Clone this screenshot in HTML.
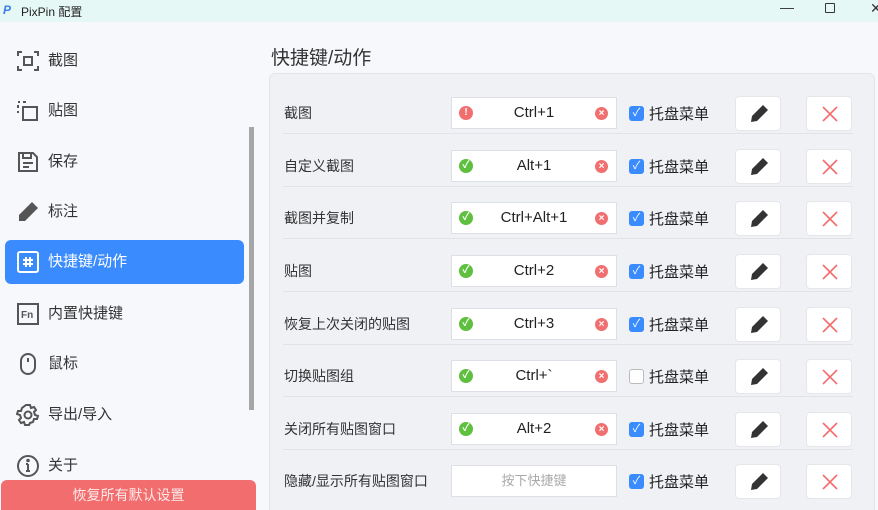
<!DOCTYPE html>
<html><head><meta charset="utf-8"><style>
*{margin:0;padding:0;box-sizing:border-box}
html,body{width:878px;height:510px;overflow:hidden}
body{background:#f7f8fc;font-family:"Liberation Sans","Noto Sans CJK SC",sans-serif;color:#333;position:relative}
.title{position:absolute;left:0;top:0;width:878px;height:22px;background:#e6f8f5;font-size:12px}
.title .t{position:absolute;left:21px;top:3px;color:#222}
.logo{position:absolute;left:3px;top:3px;width:13px;height:14px;color:#3a7fe8;font-weight:bold;font-size:12px;font-style:italic}
.wc{position:absolute;top:0;font-size:14px;color:#333}
.side{position:absolute;left:0;top:22px;width:258px;height:488px}
.item{position:absolute;left:5px;width:239px;height:44px;font-size:15px;color:#333}
.item svg{position:absolute;left:11px;top:10px}
.item span{position:absolute;left:43px;top:10px}
.item.act{background:#3a8bfd;border-radius:6px;color:#fff}
.sb{position:absolute;left:249px;top:127px;width:5px;height:283px;background:#a6a6a6}
.reset{position:absolute;left:1px;top:480px;width:255px;height:30px;background:#f26d6d;border-radius:6px 6px 0 0;font-size:14px;text-align:center;line-height:30px;color:#ffe9e9}
h1{position:absolute;left:271px;top:43px;font-size:19px;font-weight:normal;color:#333}
.panel{position:absolute;left:269px;top:73px;width:606px;height:450px;background:#eff1f5;border:1px solid #e2e4e8;border-radius:6px}
.row{position:absolute;left:283px;width:570px;height:52px}
.row .lab{position:absolute;left:1px;top:5px;font-size:14px;color:#333}
.row .line{position:absolute;left:0;top:35px;width:570px;height:1px;background:#e1e3e7}
.inp{position:absolute;left:168px;top:-1px;width:166px;height:32px;background:#fff;border:1px solid #dcdfe6;font-size:15px;text-align:center;line-height:30px;color:#222}
.inp .ic{position:absolute;left:7px;top:8px;width:14px;height:14px;border-radius:50%;color:#fff;font-size:10px;line-height:14px;font-weight:bold}
.inp .x{position:absolute;right:8px;top:9px;width:13px;height:13px;border-radius:50%;background:#f16f6f;color:#fff;font-size:10px;line-height:13px;font-weight:bold}
.inp.ph{color:#aaa;font-size:13px}
.cb{position:absolute;left:346px;top:8px;width:15px;height:15px;border-radius:3px;background:#3a8bfd;color:#fff;font-size:11px;line-height:15px;text-align:center}
.cb.off{background:#fff;border:1px solid #bbb}
.ct{position:absolute;left:366px;top:5px;font-size:15px;color:#222}
.btn{position:absolute;top:-2px;width:46px;height:35px;background:#fff;border:1px solid #e4e6ea;border-radius:4px}
.btn svg{position:absolute;left:13px;top:7px}
</style></head><body>
<div class="title"><div class="logo">P</div><div class="t">PixPin 配置</div>
<div class="wc" style="left:780px;top:-1px">—</div>
<div style="position:absolute;left:825px;top:3px;width:10px;height:10px;border:1.3px solid #333;border-radius:1px"></div>
<div class="wc" style="left:870px;top:0px">✕</div></div>
<div class="side">
<div class="item" style="top:17px"><svg width="24" height="24" viewBox="0 0 24 24" fill="none" stroke="#555" stroke-width="2"><path d="M2 7V3h4M18 3h4v4M22 17v4h-4M6 21H2v-4"/><rect x="8" y="8" width="8" height="8"/></svg><span>截图</span></div>
<div class="item" style="top:67px"><svg width="24" height="24" viewBox="0 0 24 24" fill="none" stroke="#555" stroke-width="2"><path d="M2 3h2M7 3h3M2 6v3M2 12v2" /><rect x="7" y="8" width="14" height="13"/></svg><span>贴图</span></div>
<div class="item" style="top:118px"><svg width="24" height="24" viewBox="0 0 24 24" fill="none" stroke="#555" stroke-width="2"><path d="M3 3h14l4 4v14H3z M7 3v5h8V3 M7 13h10M7 17h6"/></svg><span>保存</span></div>
<div class="item" style="top:168px"><svg width="24" height="24" viewBox="0 0 24 24" fill="#555"><path d="M16 2l6 6-13 13H3v-6z"/></svg><span>标注</span></div>
<div class="item act" style="top:218px"><svg width="24" height="24" viewBox="0 0 24 24" fill="none" stroke="#fff" stroke-width="2"><rect x="2" y="2" width="20" height="20" rx="2"/><path d="M10 7v10M14 7v10M7 10h10M7 14h10"/></svg><span>快捷键/动作</span></div>
<div class="item" style="top:270px"><svg width="24" height="24" viewBox="0 0 24 24" fill="none" stroke="#555" stroke-width="2"><rect x="2" y="2" width="20" height="20"/><text x="5" y="16" font-size="10" fill="#555" stroke="none" font-family="Liberation Sans" font-weight="bold">Fn</text></svg><span>内置快捷键</span></div>
<div class="item" style="top:320px"><svg width="24" height="24" viewBox="0 0 24 24" fill="none" stroke="#555" stroke-width="2"><rect x="5" y="2" width="14" height="20" rx="7"/><path d="M12 6v4"/></svg><span>鼠标</span></div>
<div class="item" style="top:371px"><svg width="24" height="24" viewBox="0 0 24 24" fill="none" stroke="#555" stroke-width="2"><circle cx="12" cy="12" r="3.5"/><path d="M10 2h4l1 3 3-1 2 3-2 2 1 3 3 1v0l-1 3-3 0-1 3-3 1-1 2h-4l-1-3-3 1-2-3 2-2-1-3-3-1 1-3 3 0 1-3z"/></svg><span>导出/导入</span></div>
<div class="item" style="top:422px"><svg width="24" height="24" viewBox="0 0 24 24" fill="none" stroke="#555" stroke-width="2"><circle cx="12" cy="12" r="10"/><path d="M12 10v7M10 17h4M10 10h2"/><circle cx="12" cy="6.5" r="0.8" fill="#555"/></svg><span>关于</span></div>
</div>
<div class="sb"></div>
<div class="reset">恢复所有默认设置</div>
<h1>快捷键/动作</h1>
<div class="panel"></div>

<div class="row" style="top:98px"><div class="lab">截图</div><div class="inp"><div class="ic" style="background:#f16f6f">!</div>Ctrl+1<div class="x">×</div></div><div class="cb">✓</div><div class="ct">托盘菜单</div><div class="btn" style="left:452px"><svg width="20" height="20" viewBox="0 0 20 20" fill="#333"><path d="M14 1l5 5-11 11-6 1 1-6z"/></svg></div><div class="btn" style="left:523px"><svg width="20" height="20" viewBox="0 0 20 20" stroke="#f26d6d" stroke-width="1.6"><path d="M3 3l14 14M17 3L3 17"/></svg></div><div class="line"></div></div>
<div class="row" style="top:151px"><div class="lab">自定义截图</div><div class="inp"><div class="ic" style="background:#5fbf3f">✓</div>Alt+1<div class="x">×</div></div><div class="cb">✓</div><div class="ct">托盘菜单</div><div class="btn" style="left:452px"><svg width="20" height="20" viewBox="0 0 20 20" fill="#333"><path d="M14 1l5 5-11 11-6 1 1-6z"/></svg></div><div class="btn" style="left:523px"><svg width="20" height="20" viewBox="0 0 20 20" stroke="#f26d6d" stroke-width="1.6"><path d="M3 3l14 14M17 3L3 17"/></svg></div><div class="line"></div></div>
<div class="row" style="top:203px"><div class="lab">截图并复制</div><div class="inp"><div class="ic" style="background:#5fbf3f">✓</div>Ctrl+Alt+1<div class="x">×</div></div><div class="cb">✓</div><div class="ct">托盘菜单</div><div class="btn" style="left:452px"><svg width="20" height="20" viewBox="0 0 20 20" fill="#333"><path d="M14 1l5 5-11 11-6 1 1-6z"/></svg></div><div class="btn" style="left:523px"><svg width="20" height="20" viewBox="0 0 20 20" stroke="#f26d6d" stroke-width="1.6"><path d="M3 3l14 14M17 3L3 17"/></svg></div><div class="line"></div></div>
<div class="row" style="top:256px"><div class="lab">贴图</div><div class="inp"><div class="ic" style="background:#5fbf3f">✓</div>Ctrl+2<div class="x">×</div></div><div class="cb">✓</div><div class="ct">托盘菜单</div><div class="btn" style="left:452px"><svg width="20" height="20" viewBox="0 0 20 20" fill="#333"><path d="M14 1l5 5-11 11-6 1 1-6z"/></svg></div><div class="btn" style="left:523px"><svg width="20" height="20" viewBox="0 0 20 20" stroke="#f26d6d" stroke-width="1.6"><path d="M3 3l14 14M17 3L3 17"/></svg></div><div class="line"></div></div>
<div class="row" style="top:309px"><div class="lab">恢复上次关闭的贴图</div><div class="inp"><div class="ic" style="background:#5fbf3f">✓</div>Ctrl+3<div class="x">×</div></div><div class="cb">✓</div><div class="ct">托盘菜单</div><div class="btn" style="left:452px"><svg width="20" height="20" viewBox="0 0 20 20" fill="#333"><path d="M14 1l5 5-11 11-6 1 1-6z"/></svg></div><div class="btn" style="left:523px"><svg width="20" height="20" viewBox="0 0 20 20" stroke="#f26d6d" stroke-width="1.6"><path d="M3 3l14 14M17 3L3 17"/></svg></div><div class="line"></div></div>
<div class="row" style="top:361px"><div class="lab">切换贴图组</div><div class="inp"><div class="ic" style="background:#5fbf3f">✓</div>Ctrl+`<div class="x">×</div></div><div class="cb off"></div><div class="ct">托盘菜单</div><div class="btn" style="left:452px"><svg width="20" height="20" viewBox="0 0 20 20" fill="#333"><path d="M14 1l5 5-11 11-6 1 1-6z"/></svg></div><div class="btn" style="left:523px"><svg width="20" height="20" viewBox="0 0 20 20" stroke="#f26d6d" stroke-width="1.6"><path d="M3 3l14 14M17 3L3 17"/></svg></div><div class="line"></div></div>
<div class="row" style="top:414px"><div class="lab">关闭所有贴图窗口</div><div class="inp"><div class="ic" style="background:#5fbf3f">✓</div>Alt+2<div class="x">×</div></div><div class="cb">✓</div><div class="ct">托盘菜单</div><div class="btn" style="left:452px"><svg width="20" height="20" viewBox="0 0 20 20" fill="#333"><path d="M14 1l5 5-11 11-6 1 1-6z"/></svg></div><div class="btn" style="left:523px"><svg width="20" height="20" viewBox="0 0 20 20" stroke="#f26d6d" stroke-width="1.6"><path d="M3 3l14 14M17 3L3 17"/></svg></div><div class="line"></div></div>
<div class="row" style="top:466px"><div class="lab">隐藏/显示所有贴图窗口</div><div class="inp ph">按下快捷键</div><div class="cb">✓</div><div class="ct">托盘菜单</div><div class="btn" style="left:452px"><svg width="20" height="20" viewBox="0 0 20 20" fill="#333"><path d="M14 1l5 5-11 11-6 1 1-6z"/></svg></div><div class="btn" style="left:523px"><svg width="20" height="20" viewBox="0 0 20 20" stroke="#f26d6d" stroke-width="1.6"><path d="M3 3l14 14M17 3L3 17"/></svg></div></div>
</body></html>
